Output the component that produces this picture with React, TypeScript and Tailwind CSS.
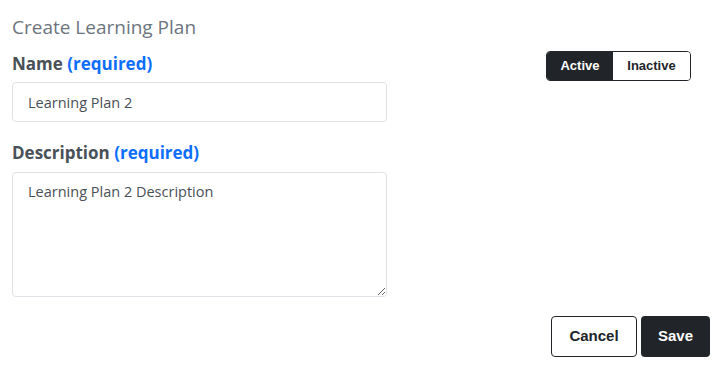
import { useState } from "react";

const labelFont = { fontFamily: "'Open Sans', 'Noto Sans', sans-serif" };

export default function App() {
  const [active, setActive] = useState(true);

  return (
    <div
      className="bg-white min-h-[372px] px-3 pt-[14px] text-[#495057]"
      style={labelFont}
    >
      <h1 className="text-[19px] leading-[27px] text-[#6c757d]">
        Create Learning Plan
      </h1>

      <div className="flex justify-between items-start mt-[11px]">
        <form className="w-[375px] flex flex-col">
          <label htmlFor="name" className="text-[17px] leading-6 font-bold">
            Name <span className="text-[#0d6efd]">(required)</span>
          </label>
          <input
            id="name"
            defaultValue="Learning Plan 2"
            className="mt-[6px] h-10 px-[15px] text-[14.5px] border border-[#dee2e6] rounded text-[#495057] outline-none"
          />

          <label
            htmlFor="description"
            className="mt-[19px] text-[17px] leading-6 font-bold"
          >
            Description <span className="text-[#0d6efd]">(required)</span>
          </label>
          <textarea
            id="description"
            defaultValue="Learning Plan 2 Description"
            className="mt-[7px] h-[125px] px-[15px] py-[7px] text-[14.5px] leading-6 border border-[#dee2e6] rounded text-[#495057] outline-none"
          />
        </form>

        <div
          className="-mt-px mr-[19px] flex h-[30px] border border-[#212529] rounded text-[13px] font-bold overflow-hidden"
          style={{ fontFamily: "'Liberation Sans', Arial, sans-serif" }}
        >
          <button
            onClick={() => setActive(true)}
            className={
              active
                ? "w-[66px] bg-[#212529] text-white"
                : "w-[66px] bg-white text-[#212529]"
            }
          >
            Active
          </button>
          <button
            onClick={() => setActive(false)}
            className={
              active
                ? "w-[77px] bg-white text-[#212529]"
                : "w-[77px] bg-[#212529] text-white"
            }
          >
            Inactive
          </button>
        </div>
      </div>

      <div
        className="flex justify-end gap-1 mt-[19px] text-[15px] font-bold"
        style={{ fontFamily: "'Liberation Sans', Arial, sans-serif" }}
      >
        <button className="w-[86px] h-[41px] border border-[#212529] rounded text-[#212529] bg-white">
          Cancel
        </button>
        <button className="w-[69px] h-[41px] rounded bg-[#212529] text-white">
          Save
        </button>
      </div>
    </div>
  );
}
